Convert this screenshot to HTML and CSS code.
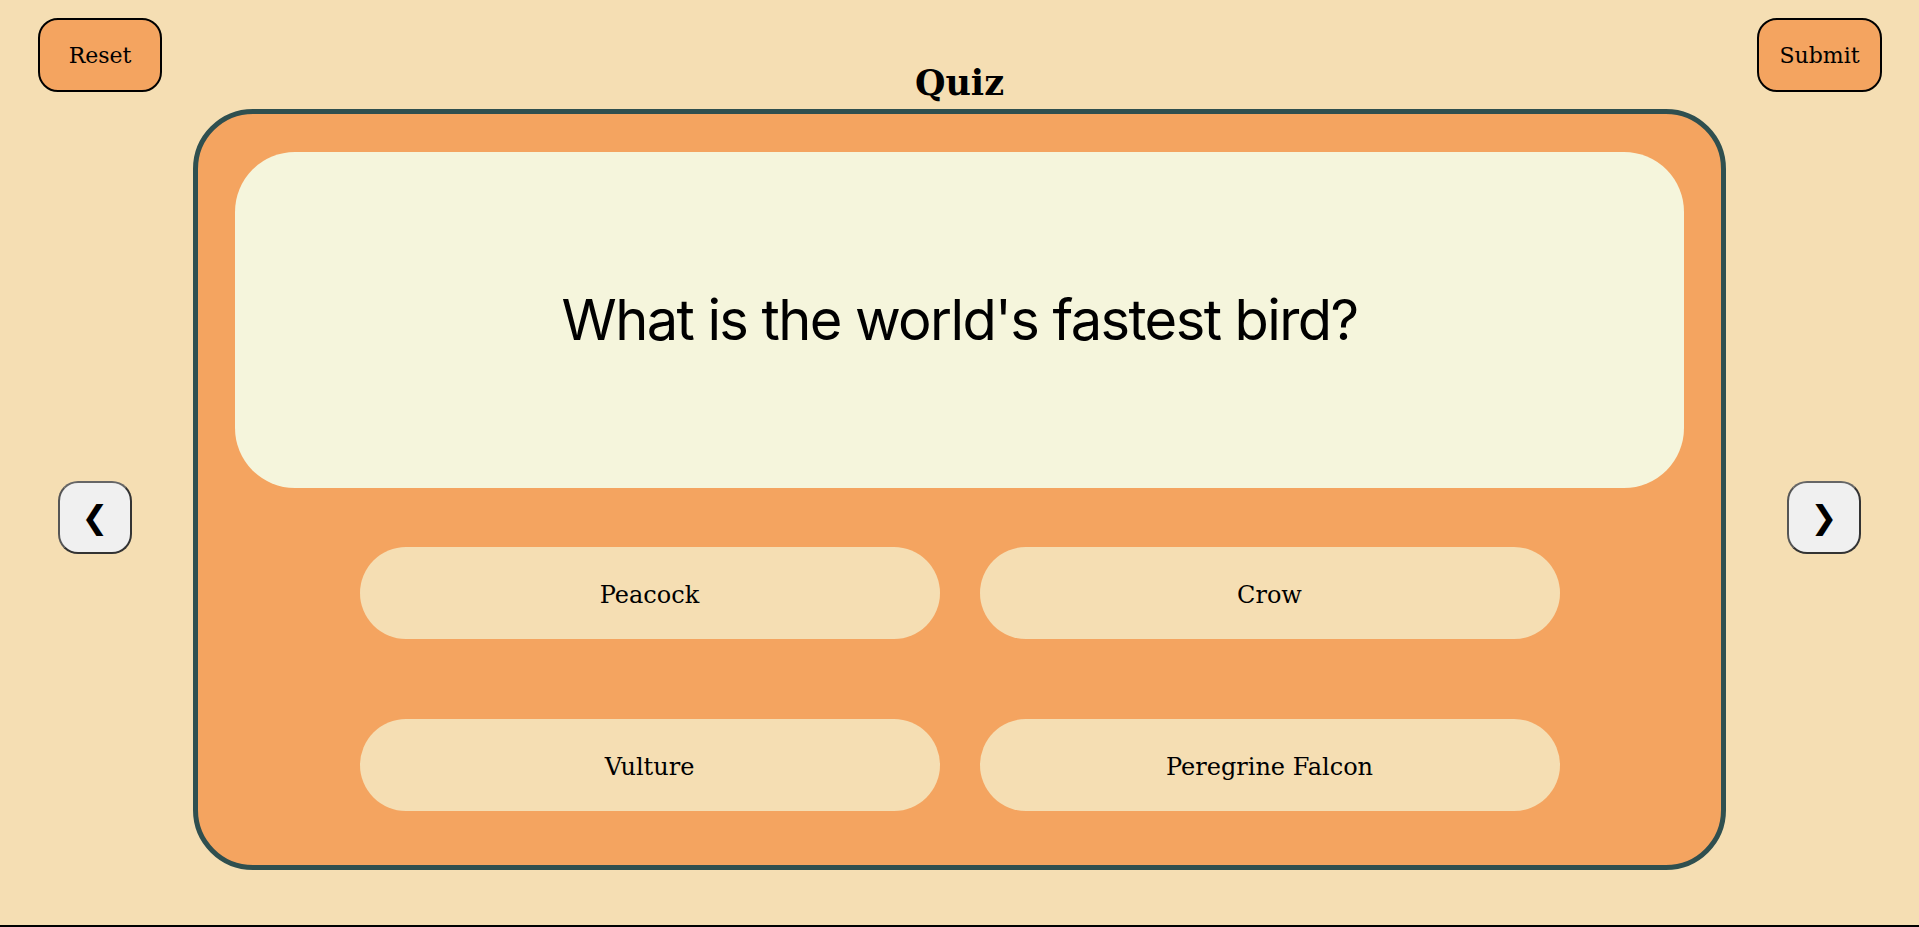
FILE: index.html
```html
<!DOCTYPE html>
<html lang="en">
<head>
<meta charset="utf-8">
<title>Quiz</title>
<link rel="stylesheet" href="styles.css">
</head>
<body>
<div class="page">
  <header class="topbar">
    <button class="action-btn reset">Reset</button>
    <h1 class="title">Quiz</h1>
    <button class="action-btn submit">Submit</button>
  </header>
  <main class="stage">
    <button class="nav-btn" aria-label="Previous">&#10094;</button>
    <section class="card">
      <div class="question">What is the world's fastest bird?</div>
      <div class="answers">
        <button class="answer">Peacock</button>
        <button class="answer">Crow</button>
        <button class="answer">Vulture</button>
        <button class="answer">Peregrine Falcon</button>
      </div>
    </section>
    <button class="nav-btn" aria-label="Next">&#10095;</button>
  </main>
</div>
</body>
</html>
```
FILE: styles.css
```css
* { box-sizing: border-box; }
html, body { margin: 0; padding: 0; }
body {
  background: #f5deb3;
  font-family: "DejaVu Serif", "Liberation Serif", serif;
  color: #000;
}
.page {
  height: 927px;
  display: flex;
  flex-direction: column;
}
.topbar {
  display: flex;
  justify-content: space-between;
  align-items: flex-end;
  padding: 18px 37px 0 38px;
}
.action-btn {
  height: 74px;
  margin-bottom: 17px;
  border: 2px solid #000;
  border-radius: 20px;
  background: #f4a460;
  font-family: "DejaVu Serif", serif;
  font-size: 22px;
  color: #000;
  padding: 0;
}
.reset { width: 124px; }
.submit { width: 125px; }
.title {
  margin: 0 0 8px;
  font-size: 35px;
  line-height: 36px;
  font-weight: bold;
}
.stage {
  flex: 1;
  display: flex;
  align-items: center;
  gap: 61px;
  padding: 0 58px;
  border-bottom: 2px solid #000;
}
.nav-btn {
  flex: none;
  width: 74px;
  height: 73px;
  border: 2px solid #333;
  border-top-color: #666;
  border-left-color: #555;
  border-radius: 20px;
  background: #f0f0f0;
  font-family: "DejaVu Sans", sans-serif;
  font-size: 32px;
  color: #000;
  padding: 0;
  display: flex;
  align-items: center;
  justify-content: center;
}
.card {
  flex: 1;
  align-self: flex-start;
  border: 5px solid #2f4f4f;
  border-radius: 60px;
  background: #f4a460;
  padding: 38px 37px 54px;
}
.question {
  height: 336px;
  border-radius: 60px;
  background: #f5f5dc;
  display: flex;
  align-items: center;
  justify-content: center;
  font-family: "Inter", "Noto Sans", sans-serif;
  font-size: 56px;
  letter-spacing: -1.6px;
}
.answers {
  margin-top: 59px;
  display: grid;
  grid-template-columns: 580px 580px;
  justify-content: center;
  gap: 80px 40px;
}
.answer {
  height: 92px;
  border: none;
  border-radius: 46px;
  background: #f5deb3;
  font-family: "DejaVu Serif", serif;
  font-size: 24px;
  color: #000;
  padding: 4px 0 0;
}
```
